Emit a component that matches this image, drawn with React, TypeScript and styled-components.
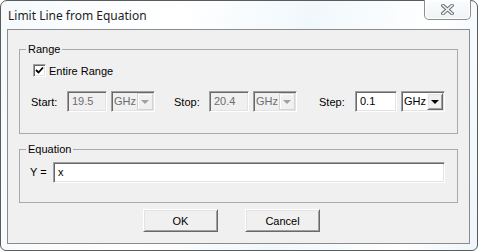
import styled, { createGlobalStyle, css } from 'styled-components';

const GlobalStyle = createGlobalStyle`
  html, body {
    margin: 0;
    padding: 0;
    background: #ffffff;
  }
  * {
    box-sizing: border-box;
  }
`;

const sunken = css`
  border-style: solid;
  border-width: 1px;
  border-color: #a0a0a0 #ffffff #ffffff #a0a0a0;
  box-shadow: inset 1px 1px 0 #696969, inset -1px -1px 0 #e3e3e3;
`;

const raised = css`
  border-style: solid;
  border-width: 1px;
  border-color: #ffffff #696969 #696969 #ffffff;
  box-shadow: inset 1px 1px 0 #e3e3e3, inset -1px -1px 0 #a0a0a0;
`;

const Frame = styled.div`
  width: 478px;
  height: 251px;
  display: flex;
  flex-direction: column;
  padding: 0 7px 6px 6px;
  border: 1px solid #5b5b5b;
  border-radius: 7px 7px 6px 6px;
  background: linear-gradient(100deg, #f6fafd 0%, #ffffff 35%, #f1f8fc 60%, #ffffff 85%, #eef6fb 100%);
  font-family: 'Liberation Sans', Arial, sans-serif;
  font-size: 11px;
  color: #000;
`;

const TitleBar = styled.div`
  height: 28px;
  display: flex;
  align-items: flex-start;
`;

const Title = styled.span`
  margin: 8px 0 0 1px;
  font-family: 'Noto Sans', 'Open Sans', sans-serif;
  font-size: 12px;
  line-height: 14px;
  color: #1e1e1e;
`;

const CloseButton = styled.div`
  margin: -1px -1px 0 auto;
  width: 47px;
  height: 20px;
  display: flex;
  align-items: center;
  justify-content: center;
  border: 1px solid #8d8d8d;
  border-top: none;
  border-radius: 0 0 5px 5px;
  background: linear-gradient(#fbfdfe, #eef3f7);
  box-shadow: inset 0 0 0 1px #ffffff;
`;

const Client = styled.div`
  flex: 1;
  display: flex;
  flex-direction: column;
  padding: 13px 11px 0 11px;
  border: 1px solid #8b8b8b;
  background: #f0f0f0;
`;

const Group = styled.fieldset<{ $height: number; $gapTop?: number }>`
  margin: ${(p) => p.$gapTop ?? 0}px 0 0 0;
  padding: 0;
  height: ${(p) => p.$height}px;
  border: 1px solid #a9a9a9;
  min-width: 0;
`;

const Legend = styled.legend`
  margin-left: 6px;
  padding: 0 2px;
  font-size: 11px;
  line-height: 13px;
`;

const GroupBody = styled.div<{ $top: number }>`
  display: flex;
  flex-direction: column;
  padding: ${(p) => p.$top}px 0 0 11px;
`;

const CheckRow = styled.label`
  display: flex;
  align-items: center;
  gap: 3px;
  margin-left: 2px;
  height: 13px;
`;

const CheckBox = styled.span`
  width: 13px;
  height: 13px;
  display: flex;
  align-items: center;
  justify-content: center;
  background: #ffffff;
  ${sunken};
`;

const FieldRow = styled.div`
  display: flex;
  align-items: center;
  margin-top: 14px;
  height: 21px;
`;

const FieldLabel = styled.span<{ $width: number; $gap?: number }>`
  width: ${(p) => p.$width}px;
  margin-left: ${(p) => p.$gap ?? 0}px;
`;

const TextBox = styled.div<{ $width: number; $disabled?: boolean }>`
  width: ${(p) => p.$width}px;
  height: 21px;
  padding: 3px 0 0 4px;
  line-height: 13px;
  background: ${(p) => (p.$disabled ? '#f0f0f0' : '#ffffff')};
  color: ${(p) => (p.$disabled ? '#6d6d6d' : '#000000')};
  ${sunken};
`;

const Combo = styled.div<{ $disabled?: boolean }>`
  width: 44px;
  height: 21px;
  margin-left: 4px;
  display: flex;
  align-items: center;
  padding: 1px 1px 1px 2px;
  background: ${(p) => (p.$disabled ? '#f0f0f0' : '#ffffff')};
  color: ${(p) => (p.$disabled ? '#6d6d6d' : '#000000')};
  ${sunken};
`;

const ComboText = styled.span`
  flex: 1;
  line-height: 13px;
`;

const DropButton = styled.span<{ $disabled?: boolean }>`
  width: 16px;
  height: 17px;
  display: flex;
  align-items: center;
  justify-content: center;
  background: #f0f0f0;
  ${(p) =>
    p.$disabled
      ? css`
          border: 1px solid #d4d4d4;
          box-shadow: inset 1px 1px 0 #ffffff;
        `
      : raised}
`;

const Arrow = styled.span<{ $disabled?: boolean }>`
  width: 0;
  height: 0;
  margin-top: 1px;
  border-left: 4px solid transparent;
  border-right: 4px solid transparent;
  border-top: 4px solid ${(p) => (p.$disabled ? '#a0a0a0' : '#000000')};
`;

const EquationRow = styled.div`
  display: flex;
  align-items: center;
  height: 22px;
  margin-left: -1px;
`;

const EquationLabel = styled.span`
  width: 23px;
`;

const Buttons = styled.div`
  display: flex;
  gap: 27px;
  margin: 6px 0 0 124px;
`;

const Button = styled.button`
  width: 75px;
  height: 23px;
  padding: 0;
  background: #f0f0f0;
  font-family: inherit;
  font-size: 11px;
  color: #000;
  ${raised};
`;

function CloseGlyph() {
  return (
    <svg width="13" height="11" viewBox="0 0 13 11">
      <path d="M2 1.5 L11 9.5 M11 1.5 L2 9.5" stroke="#6f6f6f" strokeWidth="3.6" strokeLinecap="square" />
      <path d="M2 1.5 L11 9.5 M11 1.5 L2 9.5" stroke="#f4f4f4" strokeWidth="1.6" strokeLinecap="square" />
    </svg>
  );
}

function DropDown({ disabled }: { disabled?: boolean }) {
  return (
    <Combo $disabled={disabled}>
      <ComboText>GHz</ComboText>
      <DropButton $disabled={disabled}>
        <Arrow $disabled={disabled} />
      </DropButton>
    </Combo>
  );
}

export default function App() {
  return (
    <>
      <GlobalStyle />
      <Frame>
        <TitleBar>
          <Title>Limit Line from Equation</Title>
          <CloseButton>
            <CloseGlyph />
          </CloseButton>
        </TitleBar>
        <Client>
          <Group $height={91}>
            <Legend>Range</Legend>
            <GroupBody $top={8}>
              <CheckRow>
                <CheckBox>
                  <svg width="9" height="9" viewBox="0 0 9 9">
                    <path d="M1 4 L3.5 6.5 L8 1.5" stroke="#000" strokeWidth="1.8" fill="none" />
                  </svg>
                </CheckBox>
                Entire Range
              </CheckRow>
              <FieldRow>
                <FieldLabel $width={36}>Start:</FieldLabel>
                <TextBox $width={40} $disabled>19.5</TextBox>
                <DropDown disabled />
                <FieldLabel $width={35} $gap={19}>Stop:</FieldLabel>
                <TextBox $width={40} $disabled>20.4</TextBox>
                <DropDown disabled />
                <FieldLabel $width={36} $gap={22}>Step:</FieldLabel>
                <TextBox $width={42}>0.1</TextBox>
                <DropDown />
              </FieldRow>
            </GroupBody>
          </Group>
          <Group $height={60} $gapTop={9}>
            <Legend>Equation</Legend>
            <GroupBody $top={5}>
              <EquationRow>
                <EquationLabel>Y =</EquationLabel>
                <TextBox $width={392}>x</TextBox>
              </EquationRow>
            </GroupBody>
          </Group>
          <Buttons>
            <Button>OK</Button>
            <Button>Cancel</Button>
          </Buttons>
        </Client>
      </Frame>
    </>
  );
}
